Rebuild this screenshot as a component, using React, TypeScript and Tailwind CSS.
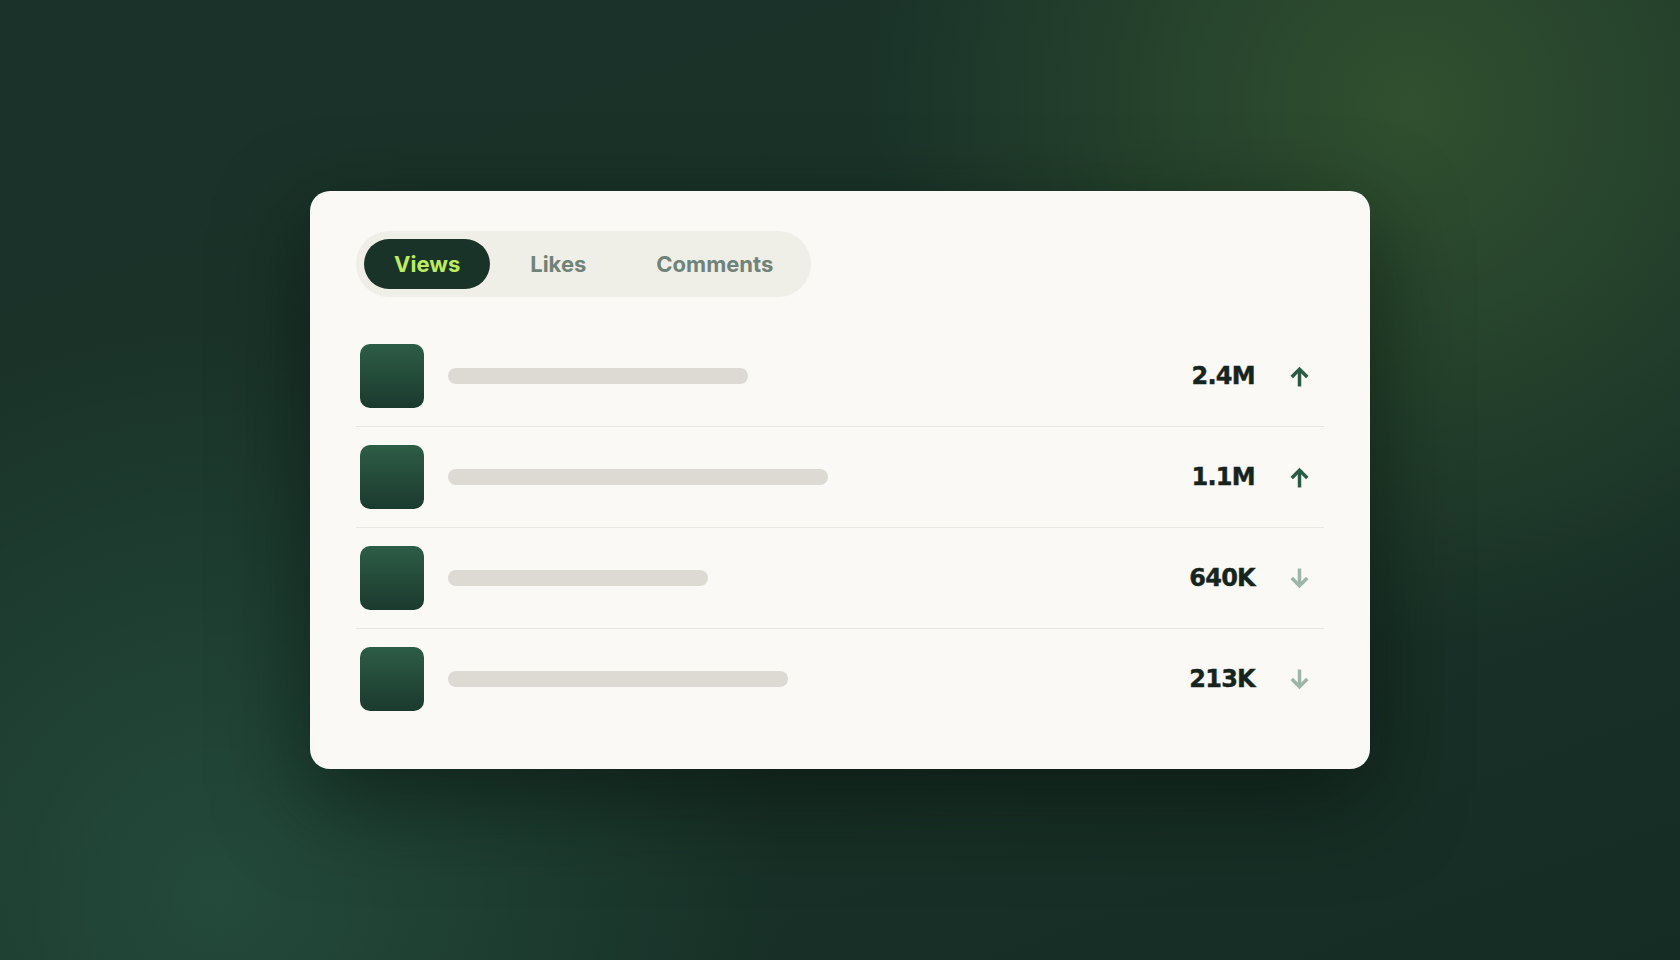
import React from "react";

const rows = [
  { w: 300, value: "2.4M", up: true },
  { w: 380, value: "1.1M", up: true },
  { w: 260, value: "640K", up: false },
  { w: 340, value: "213K", up: false },
];

function Arrow({ up }: { up: boolean }) {
  return (
    <svg
      width="21"
      height="21"
      viewBox="0 0 20 20"
      fill="none"
      stroke={up ? "#2b5c43" : "#9db6a7"}
      strokeWidth="3.3"
      strokeLinecap="butt"
      strokeLinejoin="miter"
      style={{ transform: up ? "none" : "rotate(180deg)" }}
    >
      <path d="M10 19.5V3.5" />
      <path d="M2.6 10.4L10 3l7.4 7.4" />
    </svg>
  );
}

export default function App() {
  return (
    <div className="w-full h-screen flex items-center justify-center bg-[radial-gradient(circle_at_84%_11%,#30502f_0%,rgba(48,80,47,0)_33%),radial-gradient(circle_at_13%_93%,#234a3b_0%,rgba(35,74,59,0)_33%),linear-gradient(160deg,#1a3229_0%,#1a3329_50%,#152c24_100%)]">
      <div className="w-[1060px] rounded-[20px] bg-[#faf9f5] px-[46px] pt-[40px] pb-[40px] shadow-[0_30px_90px_rgba(5,15,10,0.55)]">
        <div className="inline-flex items-center gap-[10px] rounded-full bg-[#efeee7] p-2 font-['Inter',sans-serif]">
          <div className="h-[50px] flex items-center rounded-full bg-[#1a3328] px-[30px] text-[22px] font-bold text-[#bdec5f]">
            Views
          </div>
          <div className="h-[50px] flex items-center rounded-full px-[30px] text-[22px] font-bold text-[#6f8378]">
            Likes
          </div>
          <div className="h-[50px] flex items-center rounded-full px-[30px] text-[22px] font-bold text-[#6f8378]">
            Comments
          </div>
        </div>
        <div className="mt-[29px] flex flex-col">
          {rows.map((r, i) => (
            <div
              key={i}
              className={
                "flex items-center py-[18px] pl-1 pr-[9px] " +
                (i < rows.length - 1 ? "border-b border-[#e9e7e0]" : "")
              }
            >
              <div className="w-16 h-16 rounded-[10px] bg-gradient-to-b from-[#2d5d46] to-[#1b3a2e]" />
              <div
                className="ml-6 h-4 rounded-full bg-[#dcdad2]"
                style={{ width: r.w }}
              />
              <div className="ml-auto font-['DejaVu_Sans',sans-serif] text-[24px] font-bold tracking-[-0.03em] text-[#16241d] leading-none [-webkit-text-stroke:0.4px_#16241d]">
                {r.value}
              </div>
              <div className="ml-[28px] w-8 h-8 flex items-center justify-center">
                <Arrow up={r.up} />
              </div>
            </div>
          ))}
        </div>
      </div>
    </div>
  );
}
